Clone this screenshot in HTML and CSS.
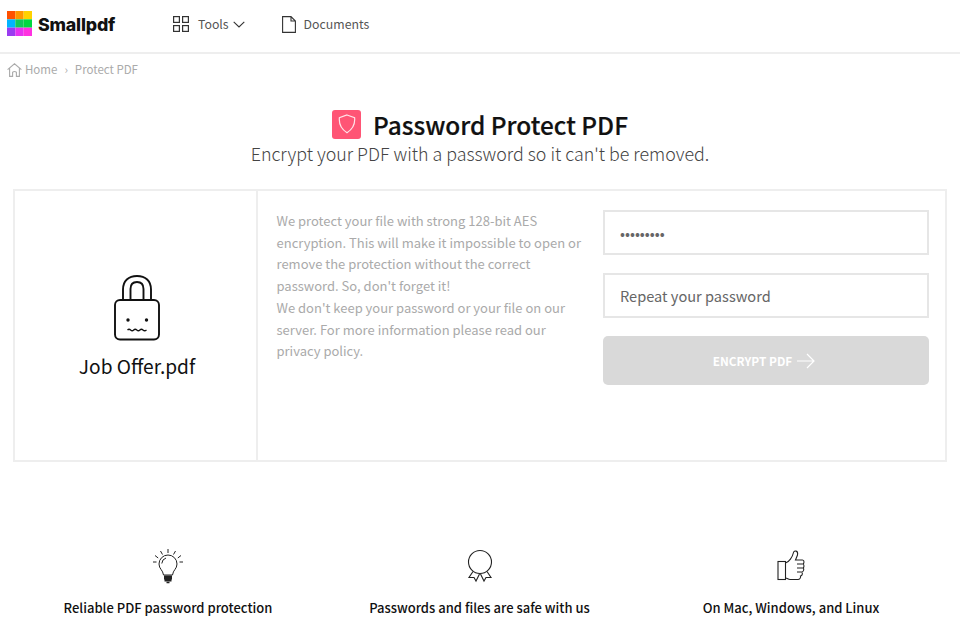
FILE: index.html
```html
<!DOCTYPE html>
<html lang="en">
<head>
<meta charset="utf-8">
<title>Password Protect PDF</title>
<link rel="stylesheet" href="styles.css">
</head>
<body>
<header class="topbar">
  <a class="brand">
    <svg class="logo" width="25" height="25" viewBox="0 0 25 25">
      <rect x="0" y="0" width="8.33" height="8.33" fill="#ff5000"/>
      <rect x="8.33" y="0" width="8.33" height="8.33" fill="#ff9600"/>
      <rect x="16.66" y="0" width="8.34" height="8.33" fill="#ffd200"/>
      <rect x="0" y="8.33" width="8.33" height="8.33" fill="#00b4ff"/>
      <rect x="8.33" y="8.33" width="8.33" height="8.33" fill="#10c85a"/>
      <rect x="16.66" y="8.33" width="8.34" height="8.33" fill="#00d840"/>
      <rect x="0" y="16.66" width="8.33" height="8.34" fill="#9a3cf0"/>
      <rect x="8.33" y="16.66" width="8.33" height="8.34" fill="#e632f0"/>
      <rect x="16.66" y="16.66" width="8.34" height="8.34" fill="#ff32e0"/>
    </svg>
    <span class="brand-name">Smallpdf</span>
  </a>
  <nav class="nav">
    <a class="nav-item nav-tools">
      <svg width="16" height="16" viewBox="0 0 16 16" fill="none" stroke="#333" stroke-width="1.2">
        <rect x="0.6" y="0.6" width="5.8" height="5.8"/><rect x="9.6" y="0.6" width="5.8" height="5.8"/>
        <rect x="0.6" y="9.6" width="5.8" height="5.8"/><rect x="9.6" y="9.6" width="5.8" height="5.8"/>
      </svg>
      <span>Tools</span>
      <svg class="chev" width="12" height="7" viewBox="0 0 12 7" fill="none" stroke="#333" stroke-width="1.1"><path d="M0.7 0.8 6 6 11.3 0.8"/></svg>
    </a>
    <a class="nav-item">
      <svg width="14" height="17" viewBox="0 0 14 17" fill="none" stroke="#333" stroke-width="1.1"><path d="M0.6 0.6H9L13.4 5V16.4H0.6ZM9 0.6V5H13.4"/></svg>
      <span>Documents</span>
    </a>
  </nav>
</header>

<div class="crumbs">
  <svg width="15" height="14" viewBox="0 0 15 14" fill="none" stroke="#aaa" stroke-width="1.1"><path d="M0.6 6.6 7.5 0.8 14.4 6.6M2.6 5.2V13.4H5.6V9.2Q7.5 7.8 9.400 9.2V13.4H12.4V5.2"/></svg>
  <span>Home</span>
  <span class="sep">›</span>
  <span>Protect PDF</span>
</div>

<section class="hero">
  <h1 class="title">
    <span class="badge">
      <svg width="18" height="20" viewBox="0 0 18 20" fill="none" stroke="#ffe3e8" stroke-width="1.2"><path d="M9 1 16.6 3.6Q17.6 13.4 9 18.8 0.4 13.4 1.4 3.6Z"/></svg>
    </span>
    <span class="title-text">Password Protect PDF</span>
  </h1>
  <p class="subtitle">Encrypt your PDF with a password so it can't be removed.</p>
</section>

<main class="card">
  <div class="file">
    <svg width="46" height="66" viewBox="0 0 46 66" fill="none" stroke="#111" stroke-width="1.900">
      <rect x="1" y="25" width="44" height="39.500" rx="5"/>
      <path d="M9 25V14.500C9 6 14.500 1 23 1S37 6 37 14.500V25"/>
      <path d="M16.500 25V14C16.500 9.500 19 7 23 7S29.500 9.500 29.500 14V25"/>
      <circle cx="14" cy="45" r="1.700" fill="#111" stroke="none"/>
      <circle cx="32.500" cy="45" r="1.700" fill="#111" stroke="none"/>
      <path stroke-width="1.300" d="M13.500 55Q15 53.500 16.600 55T19.700 55 22.800 55 25.900 55 29 55 32.500 55"/>
    </svg>
    <div class="file-name">Job Offer.pdf</div>
  </div>
  <div class="info">
    <p>We protect your file with strong 128-bit AES encryption. This will make it impossible to open or remove the protection without the correct password. So, don't forget it!</p>
    <p>We don't keep your password or your file on our server. For more information please read our privacy policy.</p>
  </div>
  <form class="form">
    <input class="field" type="password" value="secret123">
    <input class="field" type="text" placeholder="Repeat your password">
    <button class="submit" type="button">
      <span>ENCRYPT PDF</span>
      <svg width="18" height="16" viewBox="0 0 18 16" fill="none" stroke="#fff" stroke-width="1.200"><path d="M0 8H17M10 1 17 8 10 15"/></svg>
    </button>
  </form>
</main>

<section class="features">
  <div class="feature">
    <svg width="32" height="36" viewBox="0 0 32 36" fill="none" stroke="#222" stroke-width="1">
      <path d="M11.500 27C11 22 7 21 7 16A9 9 0 0 1 25 16C25 21 21 22 20.500 27Z"/>
      <path d="M9.800 15.500A6.200 6.200 0 0 1 14 10"/>
      <path d="M12 28.500H20M12 30.500H20M12.500 32.500H19.500" stroke-width="2"/>
      <path d="M14.500 34.500H17.500" stroke-width="1.500"/>
      <path d="M16 1V5M8.500 3 10.500 6.500M23.500 3 21.500 6.500M3 7.500 6.200 10M29 7.500 25.800 10M1 14H4.500M31 14H27.500"/>
    </svg>
    <div class="feature-title">Reliable PDF password protection</div>
  </div>
  <div class="feature">
    <svg width="26" height="36" viewBox="0 0 26 36" fill="none" stroke="#222" stroke-width="1.100">
      <circle cx="13" cy="14" r="11.500"/>
      <path d="M6 23.500 2 29.500 7 29.500 9 33 12.500 26"/>
      <path d="M20 23.500 24 29.500 19 29.500 17 33 13.500 26"/>
    </svg>
    <div class="feature-title">Passwords and files are safe with us</div>
  </div>
  <div class="feature">
    <svg width="28" height="36" viewBox="0 0 28 36" fill="none" stroke="#222" stroke-width="1.100">
      <rect x="1" y="13.500" width="7.500" height="18"/>
      <path d="M8.500 15C12 14 15.500 9 16.500 4.500 17 2 21.500 2.500 20.500 7L18.500 12H25.500C27.500 12 27.500 16 25.500 16 27.500 16 27.500 20 25.500 20 27.500 20 27 24 24.500 24 26 24.500 25.500 28 23.500 28 24 30 22.500 31.500 21 31.500H13C11 31.500 10.500 30 8.500 30"/>
      <path d="M20 16H25.500M20 20H25.500M20 24H24.500"/>
    </svg>
    <div class="feature-title">On Mac, Windows, and Linux</div>
  </div>
</section>
</body>
</html>
```

FILE: styles.css
```css
* { box-sizing: border-box; }
html, body { height: 640px; overflow: hidden; }
body {
  margin: 0;
  background: #fff;
  color: #222;
  font-family: "Noto Sans CJK KR", "Noto Sans", sans-serif;
}
p, h1 { margin: 0; }

.topbar {
  height: 54px;
  display: flex;
  align-items: center;
  padding: 0 0 4px 7px;
  border-bottom: 2px solid #eee;
}
.brand { display: flex; align-items: center; gap: 6px; width: 166px; }
.logo { margin-bottom: 2px; }
.brand-name { font-family: Inter, sans-serif; font-weight: 800; font-size: 17.800px; color: #111; letter-spacing: -0.2px; }
.nav { display: flex; align-items: center; gap: 37px; }
.nav-item { display: flex; align-items: center; gap: 8px; font-size: 12.300px; color: #555; line-height: 18px; }
.nav-tools { gap: 9px; }
.nav-tools .chev { margin-left: -5px; }

.crumbs { display: flex; align-items: center; gap: 3px; padding: 7px 0 0 7px; font-size: 11.500px; color: #aaa; line-height: 17px; }
.sep { margin: 0 4px; }

.hero { margin-top: 30px; text-align: center; }
.title { display: flex; justify-content: center; align-items: center; gap: 12px; font-size: 24.400px; line-height: 30px; font-weight: 500; color: #111; }
.title-text { padding-top: 2px; -webkit-text-stroke: 0.2px #111; }
.badge { width: 29px; height: 29px; border-radius: 3px; background: #ff5575; display: flex; align-items: center; justify-content: center; }
.subtitle { font-size: 17.850px; font-weight: 300; line-height: 28px; color: #444; margin-top: -1px; }

.card {
  margin: 22px 13px 0;
  height: 273px;
  border: 2px solid #eee;
  display: flex;
}
.file {
  width: 243px;
  border-right: 2px solid #eee;
  display: flex;
  flex-direction: column;
  align-items: center;
  padding: 84px 0 0 3px;
}
.file-name { margin-top: 11px; font-size: 19.150px; line-height: 28px; font-weight: 400; color: #111; }
.info { width: 345px; padding: 19px 18px 0 18.500px; font-size: 13px; line-height: 21.700px; color: #aaa; }
.form { width: 326px; padding-top: 19px; display: flex; flex-direction: column; }
.field {
  width: 326px;
  height: 45px;
  border: 2px solid #e6e6e6;
  padding: 0 15px;
  margin-bottom: 18px;
  font: 400 14.600px "Noto Sans CJK KR", sans-serif;
  color: #666;
  outline: none;
  border-radius: 0;
}
.field::placeholder { color: #666; opacity: 1; }
.submit {
  height: 49px;
  border: 0;
  border-radius: 5px;
  background: #d9d9d9;
  color: #fff;
  padding: 0 4px 0 0;
  font: 700 11.800px "Noto Sans CJK KR", sans-serif;
  display: flex;
  align-items: center;
  justify-content: center;
  gap: 5px;
}

.features { display: flex; margin-top: 86px; }
.feature { flex: none; display: flex; flex-direction: column; align-items: center; height: 84px; }
.feature:nth-child(1) { width: 336px; }
.feature:nth-child(2) { width: 287px; }
.feature:nth-child(3) { width: 336px; }
.feature svg { height: 36px; }
.feature-title { margin-top: 14px; font-size: 13px; line-height: 20px; font-weight: 500; color: #111; }
```
